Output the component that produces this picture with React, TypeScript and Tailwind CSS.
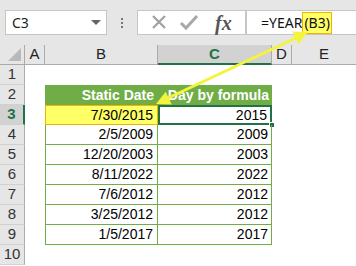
import React from "react";

const rows = [
  { n: 3, date: "7/30/2015", year: "2015" },
  { n: 4, date: "2/5/2009", year: "2009" },
  { n: 5, date: "12/20/2003", year: "2003" },
  { n: 6, date: "8/11/2022", year: "2022" },
  { n: 7, date: "7/6/2012", year: "2012" },
  { n: 8, date: "3/25/2012", year: "2012" },
  { n: 9, date: "1/5/2017", year: "2017" },
];

function RowHead({ n, active }: { n: number; active?: boolean }) {
  return (
    <div
      className={
        "w-[25px] h-[20px] flex items-center justify-center border-b border-[#d0d0d0] text-[15px] " +
        (active
          ? "bg-[#d2d2d2] text-[#217346] font-bold border-r-2 border-r-[#217346]"
          : "bg-[#e6e6e6] text-[#333] border-r border-r-[#ababab]")
      }
    >
      {n}
    </div>
  );
}

export default function App() {
  return (
    <div
      className="relative w-[356px] h-[266px] overflow-hidden bg-white"
      style={{ fontFamily: '"Liberation Sans", Arial, sans-serif' }}
    >
      {/* formula bar */}
      <div className="h-[45px] bg-[#e6e6e6] flex items-start pt-[10px] pl-[5px]">
        <div className="w-[102px] h-[25px] bg-white border border-[#c6c6c6] flex items-center pl-[6px] pr-[5px] text-[14px] text-[#222]">
          <span className="flex-1" style={{ fontFamily: '"Noto Sans", sans-serif' }}>C3</span>
          <span className="w-0 h-0 border-l-[5px] border-r-[5px] border-t-[5px] border-l-transparent border-r-transparent border-t-[#666]" />
        </div>
        <div className="w-[30px] h-[25px] flex flex-col items-center justify-center gap-[2px]">
          <span className="w-[2px] h-[2px] bg-[#777]" />
          <span className="w-[2px] h-[2px] bg-[#777]" />
          <span className="w-[2px] h-[2px] bg-[#777]" />
        </div>
        <div className="w-[109px] h-[25px] bg-white border border-[#c6c6c6] flex items-center">
          <svg width="36" height="23" viewBox="0 0 36 23" className="ml-[3px]">
            <path d="M12 5 L24 17 M24 5 L12 17" stroke="#a0a0a0" strokeWidth="2.2" fill="none" />
          </svg>
          <svg width="32" height="23" viewBox="0 0 32 23">
            <path d="M4 12 L9 17 L20 5" stroke="#a8a8a8" strokeWidth="3" fill="none" />
          </svg>
          <span
            className="ml-[6px] text-[20px] italic font-bold text-[#555]"
            style={{ fontFamily: '"Liberation Serif", "Times New Roman", serif' }}
          >
            fx
          </span>
        </div>
        <div
          className="flex-1 h-[25px] bg-white border border-[#c6c6c6] border-r-0 flex items-center pl-[14px] text-[14px] text-[#111]"
          style={{ fontFamily: '"Noto Sans", sans-serif' }}
        >
          <span>=YEAR</span>
          <span className="bg-[#ffff66] border border-[#f0b400] px-[1px] leading-[20px]">(B3)</span>
        </div>
      </div>

      {/* column headers */}
      <div className="flex h-[20px] text-[15px] text-[#222]">
        <div className="w-[25px] bg-[#e6e6e6] border-r border-b border-[#ababab] relative">
          <svg className="absolute right-[3px] bottom-[3px]" width="13" height="13" viewBox="0 0 13 13">
            <polygon points="13,0 13,13 0,13" fill="#b9b9b9" />
          </svg>
        </div>
        <div className="w-[20px] bg-[#e6e6e6] border-r border-b border-[#ababab] flex items-center justify-center">A</div>
        <div className="w-[113px] bg-[#e6e6e6] border-r border-b border-[#ababab] flex items-center justify-center">B</div>
        <div className="w-[114px] bg-[#d2d2d2] border-r border-[#ababab] border-b-2 border-b-[#217346] flex items-center justify-center text-[#217346] font-bold">C</div>
        <div className="w-[20px] bg-[#e6e6e6] border-r border-b border-[#ababab] flex items-center justify-center">D</div>
        <div className="flex-1 bg-[#e6e6e6] border-b border-[#ababab] flex items-center justify-center">E</div>
      </div>

      {/* row 1 */}
      <div className="flex">
        <RowHead n={1} />
      </div>

      {/* row 2: table header */}
      <div className="flex">
        <RowHead n={2} />
        <div className="w-[20px]" />
        <div className="w-[113px] h-[20px] bg-[#70ad47] text-white font-bold text-[14px] flex items-center justify-end pr-[4px]">
          Static Date
        </div>
        <div className="w-[114px] h-[20px] bg-[#70ad47] text-white font-bold text-[14px] flex items-center justify-end pr-[3px]">
          Day by formula
        </div>
      </div>

      {/* data rows */}
      {rows.map((r) => {
        const first = r.n === 3;
        return (
          <div className="flex" key={r.n}>
            <RowHead n={r.n} active={first} />
            <div className="w-[20px]" />
            <div
              className={
                "w-[113px] h-[20px] flex items-center justify-end pr-[4px] text-[14px] text-black " +
                (first
                  ? "bg-[#ffff66] border border-[#f0b400]"
                  : "border-l border-b border-r border-[#70ad47]")
              }
            >
              {r.date}
            </div>
            <div
              className={
                "relative w-[114px] h-[20px] flex items-center justify-end pr-[3px] text-[14px] text-black " +
                (first
                  ? "border-2 border-[#217346]"
                  : "border-r border-b border-[#70ad47]")
              }
            >
              {r.year}
              {first && (
                <span className="absolute right-[-5px] bottom-[-5px] w-[6px] h-[6px] bg-[#217346] border border-white" />
              )}
            </div>
          </div>
        );
      })}

      {/* row 10 */}
      <div className="flex">
        <RowHead n={10} />
      </div>

      {/* yellow callout arrow */}
      <svg className="absolute inset-0 pointer-events-none" width="356" height="266" viewBox="0 0 356 266">
        <line x1="166" y1="99" x2="298" y2="37" stroke="#f4f43c" strokeWidth="3" />
        <polygon points="156,104 171.7,104.4 165.7,91.7" fill="#f4f43c" />
        <polygon points="308,32 298.3,44.2 292.3,31.6" fill="#f4f43c" />
      </svg>
    </div>
  );
}
